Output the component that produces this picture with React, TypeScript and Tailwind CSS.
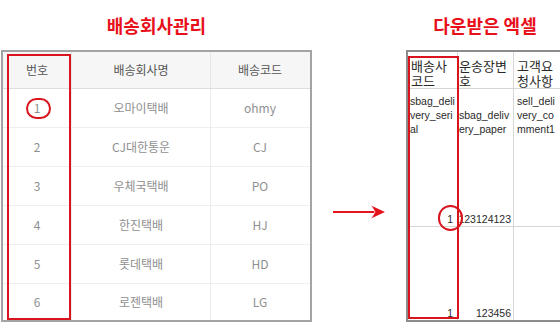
import React from 'react';

const companies = [
  { no: '1', name: '오마이택배', code: 'ohmy' },
  { no: '2', name: 'CJ대한통운', code: 'CJ' },
  { no: '3', name: '우체국택배', code: 'PO' },
  { no: '4', name: '한진택배', code: 'HJ' },
  { no: '5', name: '롯데택배', code: 'HD' },
  { no: '6', name: '로젠택배', code: 'LG' },
];

const kr = "font-['Noto_Sans_CJK_KR','Noto_Sans',sans-serif]";
const xl = "font-['Liberation_Sans','Noto_Sans_CJK_KR',sans-serif]";

function CompanyTable() {
  return (
    <div className="relative border-2 border-[#a3a3a3] bg-white">
      <div className="grid grid-cols-[69px_139px_98px] h-[37px] bg-[#f6f6f6] border-b border-[#dedede] text-[12px] text-[#555]">
        <div className="flex items-center justify-center border-r border-[#e6e6e6]">번호</div>
        <div className="flex items-center justify-center border-r border-[#e6e6e6]">배송회사명</div>
        <div className="flex items-center justify-center">배송코드</div>
      </div>
      {companies.map((c, i) => (
        <div
          key={c.no}
          className={`grid grid-cols-[69px_139px_98px] text-[12px] text-[#8f8f8f] ${
            i === companies.length - 1 ? 'h-[36px]' : 'h-[39px] border-b border-[#efefef]'
          }`}
        >
          <div className="flex items-center justify-center border-r border-[#ececec]">{c.no}</div>
          <div className="flex items-center justify-center border-r border-[#ececec]">{c.name}</div>
          <div className="flex items-center justify-center">{c.code}</div>
        </div>
      ))}

      {/* 강조 표시 */}
      <div className="absolute left-[4px] top-[2px] h-[266px] w-[64px] border-2 border-[#d9141c]" />
      <div className="absolute left-[23px] top-[46px] h-[21px] w-[25px] rounded-full border-2 border-[#d9141c]" />
    </div>
  );
}

function Arrow() {
  return (
    <svg width="56" height="16" viewBox="0 0 56 16" className="text-[#e3141c]">
      <path d="M1 8 H50" stroke="currentColor" strokeWidth="2.2" fill="none" />
      <path d="M39 1.5 L53 8 L39 14.5 L43 8 Z" fill="currentColor" />
      <path d="M39 1.5 L43 8 L39 14.5" stroke="#fff" strokeWidth="0.8" fill="none" />
    </svg>
  );
}

function ExcelSheet() {
  return (
    <div className="relative h-[272px] border-2 border-r-0 border-[#8c8c8c] bg-white text-[#2a2a2a]">
      <div className="grid grid-cols-[50px_56px_1fr] h-[37px] border-b border-[#d6d6d6] text-[13px] leading-[15px]">
        <div className="flex flex-col justify-end border-r border-[#d6d6d6] pl-[3px]">
          <span>배송사</span>
          <span>코드</span>
        </div>
        <div className="flex flex-col justify-end border-r border-[#d6d6d6] pl-[1px]">
          <span>운송장변</span>
          <span>호</span>
        </div>
        <div className="flex flex-col justify-end pl-[3px]">
          <span>고객요</span>
          <span>청사항</span>
        </div>
      </div>

      <div className={`grid grid-cols-[50px_56px_1fr] h-[47px] text-[10.5px] leading-[14px] ${xl}`}>
        <div className="flex flex-col justify-end border-r border-[#d6d6d6] pl-[2px]">
          <span>sbag_deli</span>
          <span>very_seri</span>
          <span>al</span>
        </div>
        <div className="flex flex-col justify-end overflow-hidden border-r border-[#d6d6d6] pl-[1px]">
          <span>sbag_deliv</span>
          <span>ery_paper</span>
        </div>
        <div className="flex flex-col justify-end pl-[3px]">
          <span>sell_deli</span>
          <span>very_co</span>
          <span>mment1</span>
        </div>
      </div>

      <div className={`grid grid-cols-[50px_56px_1fr] h-[91px] border-b border-[#d6d6d6] text-[10.5px] leading-[14px] ${xl}`}>
        <div className="flex items-end justify-end border-r border-[#d6d6d6] pr-[4px]">1</div>
        <div className="flex items-end justify-end border-r border-[#d6d6d6] pr-[2px]">123124123</div>
        <div />
      </div>

      <div className={`grid grid-cols-[50px_56px_1fr] h-[93px] text-[10.5px] leading-[14px] ${xl}`}>
        <div className="flex items-end justify-end border-r border-[#d6d6d6] pr-[4px]">1</div>
        <div className="flex items-end justify-end border-r border-[#d6d6d6] pr-[2px]">123456</div>
        <div />
      </div>

      {/* 강조 표시 */}
      <div className="absolute left-0 top-[4px] h-[263px] w-[51px] border-2 border-[#d9141c]" />
      <div className="absolute left-[30px] top-[153px] h-[26px] w-[25px] rounded-full border-2 border-[#d9141c]" />
    </div>
  );
}

export default function App() {
  return (
    <div className={`flex h-[324px] w-[560px] overflow-hidden bg-white ${kr}`}>
      <section className="w-[312px] shrink-0 pl-[1px]">
        <h1 className="flex h-[50px] items-center justify-center pt-[1px] text-[18px] font-bold text-[#e8101a]">
          배송회사관리
        </h1>
        <CompanyTable />
      </section>

      <div className="flex w-[94px] shrink-0 pl-[20px] pt-[204px]">
        <div>
          <Arrow />
        </div>
      </div>

      <section className="flex-1">
        <h1 className="flex h-[50px] items-center justify-center pl-[4px] pt-[1px] text-[18px] font-bold text-[#e8101a]">
          다운받은 엑셀
        </h1>
        <ExcelSheet />
      </section>
    </div>
  );
}
